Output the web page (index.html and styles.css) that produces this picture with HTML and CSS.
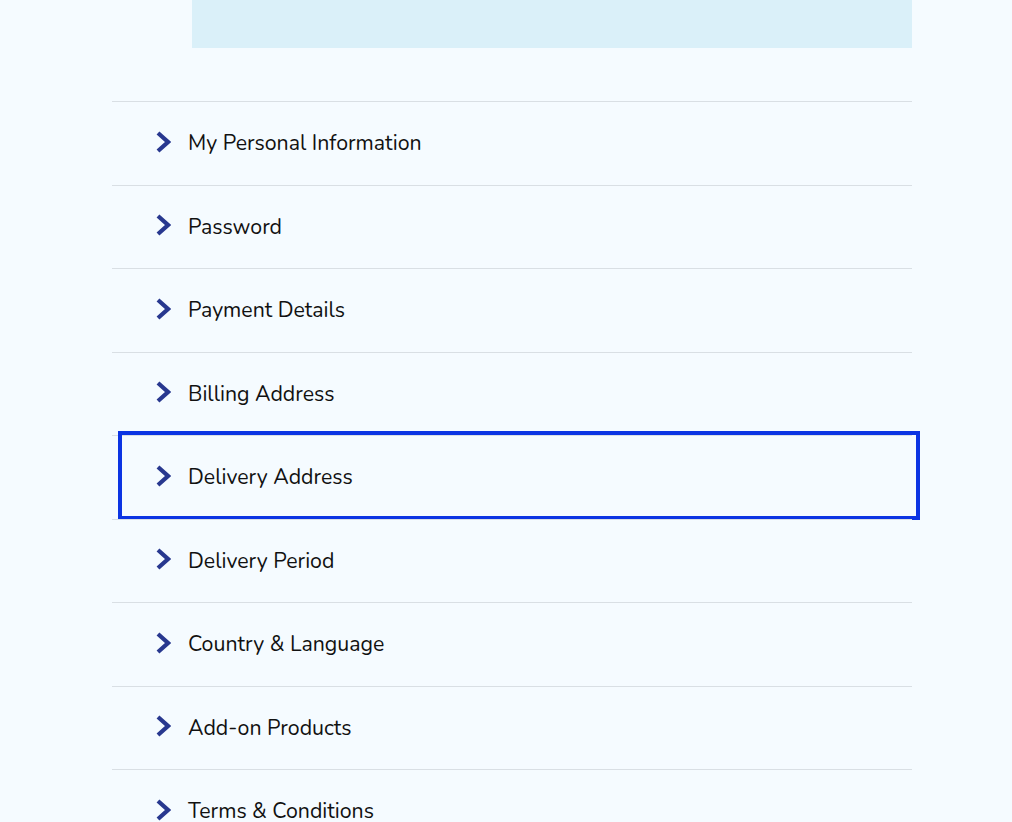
FILE: index.html
```html
<!DOCTYPE html>
<html lang="en">
<head>
  <meta charset="UTF-8" />
  <meta name="viewport" content="width=device-width, initial-scale=1.0" />
  <title>My Account</title>
  <link rel="stylesheet" href="styles.css">
</head>
<body>
  <div class="page">
    <div class="banner"></div>

    <ul class="menu">
      <li class="menu-item"><a href="#" class="menu-link"><svg class="chevron" viewBox="0 0 16 22"><polyline points="3,2 13,11 3,20" /></svg>My Personal Information</a></li>
      <li class="menu-item"><a href="#" class="menu-link"><svg class="chevron" viewBox="0 0 16 22"><polyline points="3,2 13,11 3,20" /></svg>Password</a></li>
      <li class="menu-item"><a href="#" class="menu-link"><svg class="chevron" viewBox="0 0 16 22"><polyline points="3,2 13,11 3,20" /></svg>Payment Details</a></li>
      <li class="menu-item"><a href="#" class="menu-link"><svg class="chevron" viewBox="0 0 16 22"><polyline points="3,2 13,11 3,20" /></svg>Billing Address</a></li>
      <li class="menu-item is-focused"><a href="#" class="menu-link"><svg class="chevron" viewBox="0 0 16 22"><polyline points="3,2 13,11 3,20" /></svg>Delivery Address</a></li>
      <li class="menu-item"><a href="#" class="menu-link"><svg class="chevron" viewBox="0 0 16 22"><polyline points="3,2 13,11 3,20" /></svg>Delivery Period</a></li>
      <li class="menu-item"><a href="#" class="menu-link"><svg class="chevron" viewBox="0 0 16 22"><polyline points="3,2 13,11 3,20" /></svg>Country &amp; Language</a></li>
      <li class="menu-item"><a href="#" class="menu-link"><svg class="chevron" viewBox="0 0 16 22"><polyline points="3,2 13,11 3,20" /></svg>Add-on Products</a></li>
      <li class="menu-item"><a href="#" class="menu-link"><svg class="chevron" viewBox="0 0 16 22"><polyline points="3,2 13,11 3,20" /></svg>Terms &amp; Conditions</a></li>
    </ul>
  </div>
</body>
</html>
```

FILE: styles.css
```css
body {
  margin: 0;
  font-family: 'Nunito', 'Lato', sans-serif;
  background: #f5fbff;
  color: #111;
}

.page {
  width: 800px;
  margin-left: 112px;
}

.banner {
  margin-left: 80px;
  height: 48px;
  background: #daf0f9;
}

.menu {
  list-style: none;
  margin: 53px 0 0;
  padding: 0;
}

.menu-item {
  position: relative;
  box-sizing: border-box;
  height: 83.5px;
  border-top: 1px solid #d9dfe4;
}

.menu-link {
  display: flex;
  align-items: center;
  height: 100%;
  padding-left: 43px;
  font-size: 21.3px;
  color: #111;
  text-decoration: none;
}

.chevron {
  width: 16px;
  height: 22px;
  margin: -3px 17px 0 0;
  fill: none;
  stroke: #28388f;
  stroke-width: 4.2;
}

.is-focused::after {
  content: '';
  position: absolute;
  top: -5px;
  left: 6px;
  right: -8px;
  bottom: -1px;
  border: 4px solid #0b34e3;
  pointer-events: none;
}
```
